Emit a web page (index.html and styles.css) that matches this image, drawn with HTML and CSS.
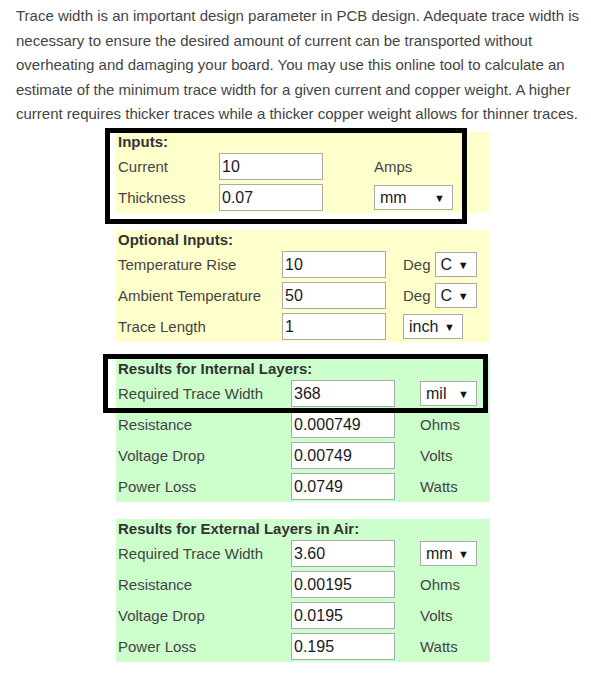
FILE: index.html
```html
<!DOCTYPE html>
<html>
<head>
<meta charset="utf-8">
<link rel="stylesheet" href="styles.css">
</head>
<body>
<p class="intro">Trace width is an important design parameter in PCB design. Adequate trace width is necessary to ensure the desired amount of current can be transported without overheating and damaging your board. You may use this online tool to calculate an estimate of the minimum trace width for a given current and copper weight. A higher current requires thicker traces while a thicker copper weight allows for thinner traces.</p>

<div class="calc">
  <div class="panel yellow cols-a first">
    <div class="title">Inputs:</div>
    <div class="label">Current</div>
    <div class="cell"><div class="field">10</div></div>
    <div class="unit">Amps</div>
    <div class="label">Thickness</div>
    <div class="cell"><div class="field">0.07</div></div>
    <div class="unit"><div class="select w-mm1"><span>mm</span><span class="arrow">&#9660;</span></div></div>
    <div class="mark mark-inputs"></div>
  </div>

  <div class="panel yellow cols-b gap17">
    <div class="title">Optional Inputs:</div>
    <div class="label">Temperature Rise</div>
    <div class="cell"><div class="field">10</div></div>
    <div class="unit">Deg <div class="select w-c"><span>C</span><span class="arrow">&#9660;</span></div></div>
    <div class="label">Ambient Temperature</div>
    <div class="cell"><div class="field">50</div></div>
    <div class="unit">Deg <div class="select w-c"><span>C</span><span class="arrow">&#9660;</span></div></div>
    <div class="label">Trace Length</div>
    <div class="cell"><div class="field">1</div></div>
    <div class="unit"><div class="select w-inch"><span>inch</span><span class="arrow">&#9660;</span></div></div>
  </div>

  <div class="panel green cols-c gap17">
    <div class="title">Results for Internal Layers:</div>
    <div class="label">Required Trace Width</div>
    <div class="cell"><div class="field">368</div></div>
    <div class="unit"><div class="select w-mil"><span>mil</span><span class="arrow">&#9660;</span></div></div>
    <div class="label">Resistance</div>
    <div class="cell"><div class="field">0.000749</div></div>
    <div class="unit">Ohms</div>
    <div class="label">Voltage Drop</div>
    <div class="cell"><div class="field">0.00749</div></div>
    <div class="unit">Volts</div>
    <div class="label">Power Loss</div>
    <div class="cell"><div class="field">0.0749</div></div>
    <div class="unit">Watts</div>
    <div class="mark mark-internal"></div>
  </div>

  <div class="panel green cols-c gap17">
    <div class="title">Results for External Layers in Air:</div>
    <div class="label">Required Trace Width</div>
    <div class="cell"><div class="field">3.60</div></div>
    <div class="unit"><div class="select w-mil"><span>mm</span><span class="arrow">&#9660;</span></div></div>
    <div class="label">Resistance</div>
    <div class="cell"><div class="field">0.00195</div></div>
    <div class="unit">Ohms</div>
    <div class="label">Voltage Drop</div>
    <div class="cell"><div class="field">0.0195</div></div>
    <div class="unit">Volts</div>
    <div class="label">Power Loss</div>
    <div class="cell"><div class="field">0.195</div></div>
    <div class="unit">Watts</div>
  </div>
</div>
</body>
</html>
```

FILE: styles.css
```css
html, body {
  margin: 0;
  padding: 0;
  background: #ffffff;
}
body {
  font-family: "Liberation Sans", Arial, sans-serif;
  color: #444444;
  padding: 4px 0 0 16px;
}
.intro {
  margin: 0;
  width: 568px;
  font-size: 15px;
  line-height: 24.5px;
  color: #444444;
}
.calc {
  margin-left: 100px;
  margin-top: 5.5px;
  width: 374px;
}
.panel {
  position: relative;
  display: grid;
  grid-template-rows: 19px;
  grid-auto-rows: 31px;
  align-items: center;
  padding-left: 2px;
  font-size: 15px;
}
.yellow { background: #ffffcc; }
.green { background: #ccffcc; }
.gap17 { margin-top: 17px; }
.cols-a { grid-template-columns: 101px 155px 1fr; }
.cols-b { grid-template-columns: 164px 121px 1fr; }
.cols-c { grid-template-columns: 173px 129px 1fr; }
.title {
  grid-column: 1 / -1;
  grid-row: 1;
  height: 19px;
  line-height: 19px;
  font-weight: bold;
  color: #333333;
  align-self: start;
}
.label {
  color: #444444;
  white-space: nowrap;
}
.unit {
  display: flex;
  align-items: center;
  gap: 4px;
  color: #444444;
  white-space: nowrap;
}
.field {
  box-sizing: border-box;
  width: 104px;
  height: 27px;
  border: 1px solid #a9a9a9;
  background: #ffffff;
  font-size: 16px;
  line-height: 25px;
  padding-left: 2px;
  color: #1a1a1a;
}
.select {
  box-sizing: border-box;
  height: 25px;
  border: 1px solid #a9a9a9;
  background: #ffffff;
  display: flex;
  align-items: center;
  justify-content: space-between;
  padding: 0 7px 0 5px;
  font-size: 16px;
  color: #1a1a1a;
}
.arrow {
  font-size: 11px;
  color: #111111;
}
.w-mm1 { width: 79px; }
.w-c { width: 42px; }
.w-inch { width: 60px; }
.w-mil { width: 57px; }
.mark {
  position: absolute;
  box-sizing: border-box;
  border: 5px solid #000000;
  pointer-events: none;
}
.mark-inputs {
  left: -11px;
  top: -4px;
  width: 362px;
  height: 96px;
}
.mark-internal {
  left: -13px;
  top: -5px;
  width: 385px;
  height: 59px;
}
```
